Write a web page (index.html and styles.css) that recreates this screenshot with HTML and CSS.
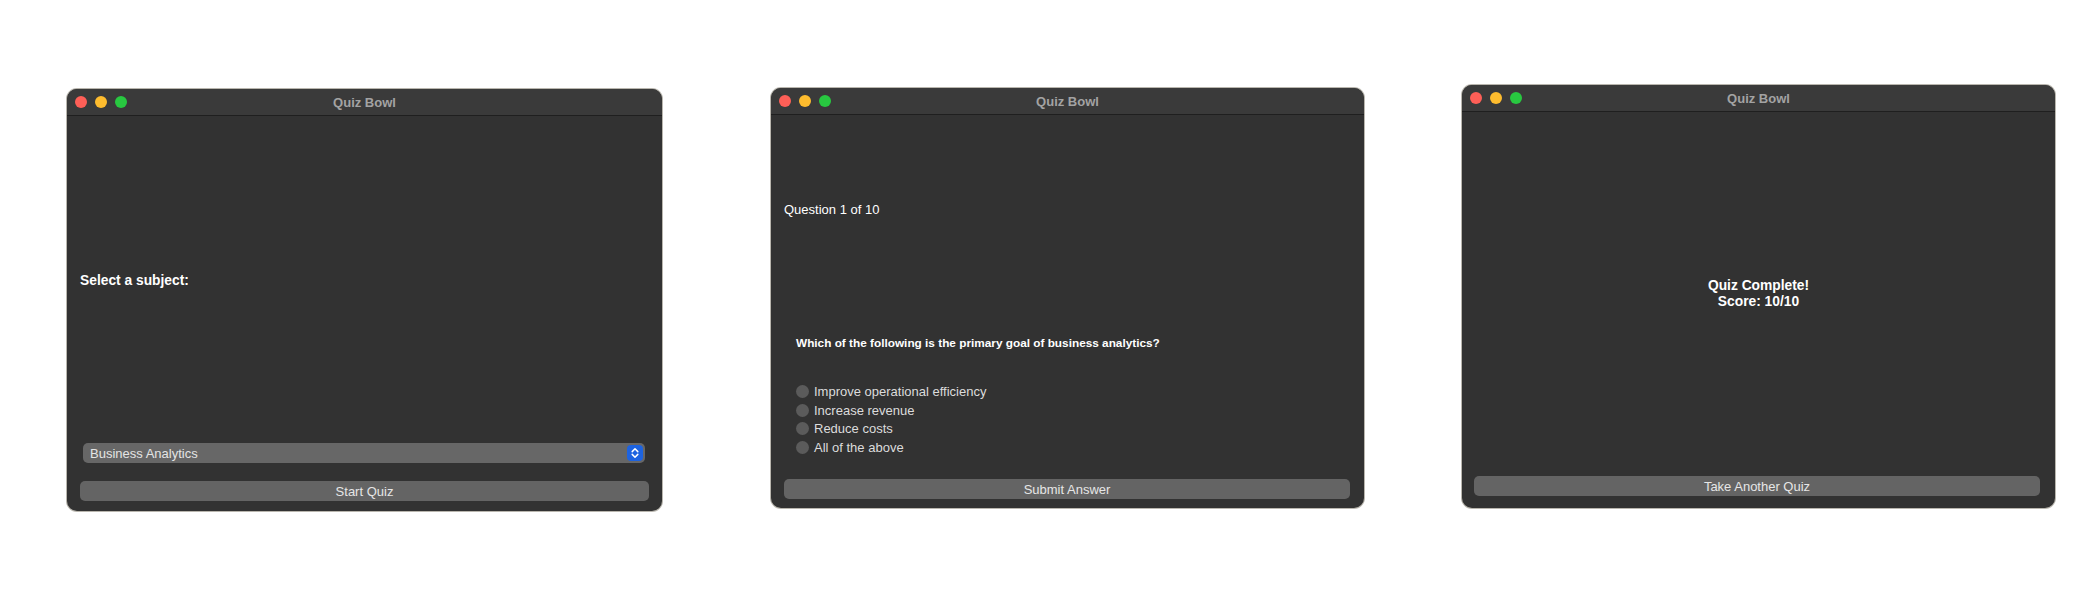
FILE: index.html
```html
<!DOCTYPE html>
<html>
<head>
<meta charset="utf-8">
<title>Quiz Bowl</title>
<link rel="stylesheet" href="styles.css">
</head>
<body>
<div class="stage">
  <section class="window w1">
    <header class="titlebar">
      <div class="lights"><span class="light red"></span><span class="light yellow"></span><span class="light green"></span></div>
      <div class="title">Quiz Bowl</div>
    </header>
    <div class="content c1">
      <div class="subject-label">Select a subject:</div>
      <div class="spacer"></div>
      <div class="select">
        <span class="select-text">Business Analytics</span>
        <span class="stepper">
          <svg width="10" height="12" viewBox="0 0 10 12"><path d="M2.2 4.6 L5 1.8 L7.8 4.6" fill="none" stroke="#fff" stroke-width="1.5" stroke-linecap="round" stroke-linejoin="round"/><path d="M2.2 7.4 L5 10.2 L7.8 7.4" fill="none" stroke="#fff" stroke-width="1.5" stroke-linecap="round" stroke-linejoin="round"/></svg>
        </span>
      </div>
      <button class="btn b1">Start Quiz</button>
    </div>
  </section>

  <section class="window w2">
    <header class="titlebar">
      <div class="lights"><span class="light red"></span><span class="light yellow"></span><span class="light green"></span></div>
      <div class="title">Quiz Bowl</div>
    </header>
    <div class="content c2">
      <div class="counter">Question 1 of 10</div>
      <div class="question">Which of the following is the primary goal of business analytics?</div>
      <ul class="options">
        <li class="option"><span class="radio"></span>Improve operational efficiency</li>
        <li class="option"><span class="radio"></span>Increase revenue</li>
        <li class="option"><span class="radio"></span>Reduce costs</li>
        <li class="option"><span class="radio"></span>All of the above</li>
      </ul>
      <div class="spacer"></div>
      <button class="btn b2">Submit Answer</button>
    </div>
  </section>

  <section class="window w3">
    <header class="titlebar">
      <div class="lights"><span class="light red"></span><span class="light yellow"></span><span class="light green"></span></div>
      <div class="title">Quiz Bowl</div>
    </header>
    <div class="content c3">
      <div class="result">Quiz Complete!<br>Score: 10/10</div>
      <div class="spacer"></div>
      <button class="btn b3">Take Another Quiz</button>
    </div>
  </section>
</div>
</body>
</html>
```

FILE: styles.css
```css
* { box-sizing: border-box; }
html, body { margin: 0; padding: 0; background: #ffffff; }
body {
  width: 2100px;
  height: 600px;
  overflow: hidden;
  font-family: "Liberation Sans", Arial, sans-serif;
}
.stage {
  display: flex;
  align-items: flex-start;
  padding-left: 67px;
}
.window {
  display: flex;
  flex-direction: column;
  background: #323232;
  border-radius: 10px;
  box-shadow: 0 0 0 1px #b9b6ae;
  overflow: hidden;
}
.w1 { width: 595px; height: 422px; margin-top: 89px; }
.w2 { width: 593px; height: 420px; margin-top: 88px; margin-left: 109px; }
.w3 { width: 593px; height: 423px; margin-top: 85px; margin-left: 98px; }

.titlebar {
  position: relative;
  height: 27px;
  flex: none;
  background: #3a3a3a;
  border-bottom: 1px solid #1f1f1f;
  display: flex;
  align-items: center;
}
.lights {
  display: flex;
  gap: 8px;
  padding-left: 8px;
}
.light { width: 12px; height: 12px; border-radius: 50%; display: block; }
.red { background: #fe5f57; }
.yellow { background: #febc2e; }
.green { background: #28c840; }
.title {
  position: absolute;
  left: 0; right: 0; top: 0; bottom: 0;
  display: flex;
  align-items: center;
  justify-content: center;
  color: #a3a3a3;
  font-weight: bold;
  font-size: 13px;
}

.content {
  flex: 1;
  display: flex;
  flex-direction: column;
}
.spacer { flex: 1; }

/* window 1 */
.c1 { padding: 0 13px 10px 13px; }
.subject-label {
  margin-top: 157px;
  color: #ffffff;
  font-weight: bold;
  font-size: 13.8px;
  line-height: 16px;
}
.select {
  display: flex;
  align-items: center;
  justify-content: space-between;
  height: 20px;
  margin: 0 4px 18px 3px;
  background: #676767;
  border-radius: 5px;
  padding: 0 2px 0 7px;
}
.select-text { color: #e4e4e4; font-size: 13px; }
.stepper {
  width: 16px;
  height: 16px;
  border-radius: 4px;
  background: #1d63e0;
  display: flex;
  align-items: center;
  justify-content: center;
}
.btn {
  display: block;
  height: 20px;
  border: none;
  border-radius: 5px;
  background: #646464;
  color: #e6e6e6;
  font-family: "Liberation Sans", Arial, sans-serif;
  font-size: 13px;
  padding: 0;
}

/* window 2 */
.c2 { padding: 0 14px 9px 13px; }
.counter {
  margin-top: 87px;
  color: #ffffff;
  font-size: 13px;
  line-height: 16px;
}
.question {
  margin-top: 118px;
  margin-left: 12px;
  color: #ffffff;
  font-weight: bold;
  font-size: 11.8px;
  line-height: 14px;
}
.options {
  list-style: none;
  margin: 32px 0 0 12px;
  padding: 0;
}
.option {
  display: flex;
  align-items: center;
  gap: 5px;
  height: 18.7px;
  color: #dcdcdc;
  font-size: 13px;
}
.radio {
  width: 13px;
  height: 13px;
  border-radius: 50%;
  background: #5b5b5b;
  flex: none;
}

/* window 3 */
.c3 { padding: 0 15px 12px 12px; }
.result {
  margin-top: 166px;
  text-align: center;
  color: #ffffff;
  font-weight: bold;
  font-size: 13.8px;
  line-height: 16px;
  padding-left: 3px;
}
```
